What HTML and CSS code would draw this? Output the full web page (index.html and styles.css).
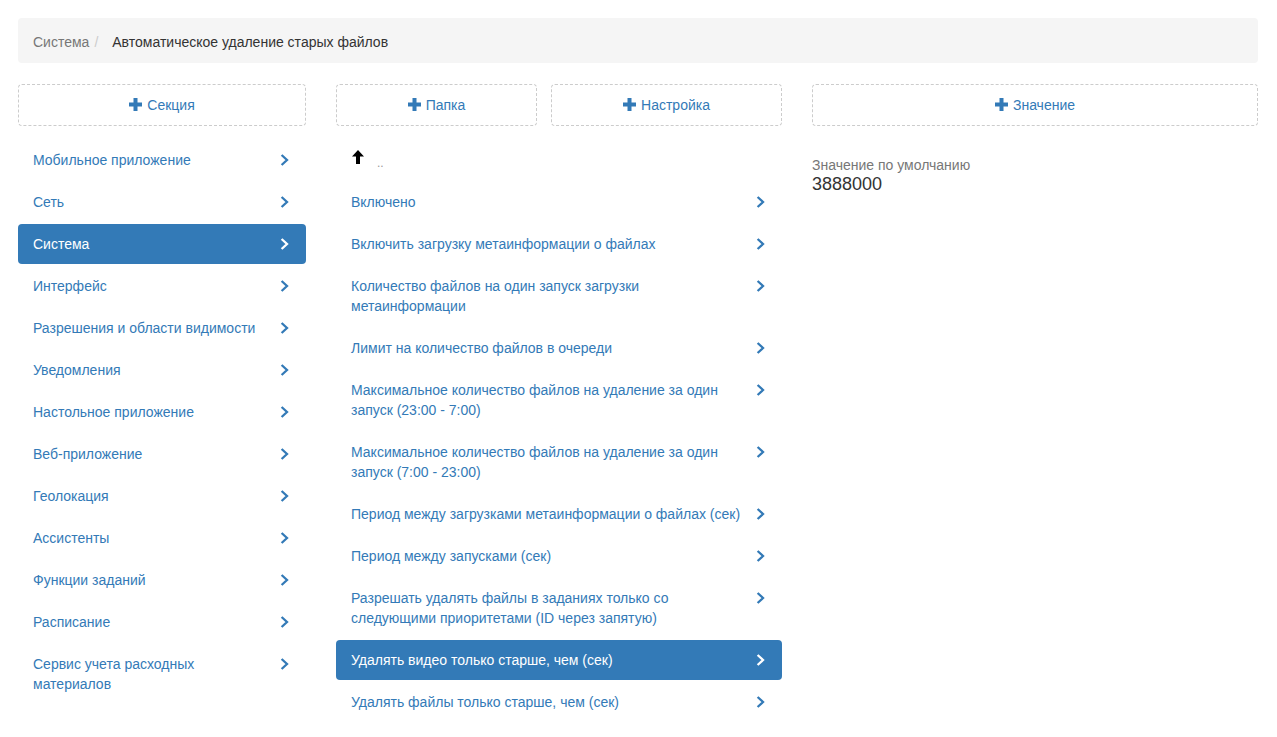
FILE: index.html
```html
<!DOCTYPE html>
<html lang="ru">
<head>
    <meta charset="UTF-8">
    <title>Настройки</title>
    <link rel="stylesheet" href="styles.css">
</head>
<body>
<div class="page">
    <!-- Breadcrumb -->
    <div class="breadcrumb">
        <span class="crumb">Система</span><span class="sep">/</span><span class="crumb active">Автоматическое удаление старых файлов</span>
    </div>

    <div class="columns">
        <!-- Sections -->
        <div class="column">
            <div class="btn-row">
                <button class="add-btn"><svg class="plus" viewBox="0 0 13 13"><path d="M4.5 0h4v4.5H13v4H8.5V13h-4V8.5H0v-4h4.5z"/></svg>Секция</button>
            </div>
            <ul class="nav-list">
                <li><a href="#"><span class="label">Мобильное приложение</span><svg class="chevron" viewBox="0 0 9 12"><polyline points="1.6,1 7,6 1.6,11"/></svg></a></li>
                <li><a href="#"><span class="label">Сеть</span><svg class="chevron" viewBox="0 0 9 12"><polyline points="1.6,1 7,6 1.6,11"/></svg></a></li>
                <li class="active"><a href="#"><span class="label">Система</span><svg class="chevron" viewBox="0 0 9 12"><polyline points="1.6,1 7,6 1.6,11"/></svg></a></li>
                <li><a href="#"><span class="label">Интерфейс</span><svg class="chevron" viewBox="0 0 9 12"><polyline points="1.6,1 7,6 1.6,11"/></svg></a></li>
                <li><a href="#"><span class="label">Разрешения и области видимости</span><svg class="chevron" viewBox="0 0 9 12"><polyline points="1.6,1 7,6 1.6,11"/></svg></a></li>
                <li><a href="#"><span class="label">Уведомления</span><svg class="chevron" viewBox="0 0 9 12"><polyline points="1.6,1 7,6 1.6,11"/></svg></a></li>
                <li><a href="#"><span class="label">Настольное приложение</span><svg class="chevron" viewBox="0 0 9 12"><polyline points="1.6,1 7,6 1.6,11"/></svg></a></li>
                <li><a href="#"><span class="label">Веб-приложение</span><svg class="chevron" viewBox="0 0 9 12"><polyline points="1.6,1 7,6 1.6,11"/></svg></a></li>
                <li><a href="#"><span class="label">Геолокация</span><svg class="chevron" viewBox="0 0 9 12"><polyline points="1.6,1 7,6 1.6,11"/></svg></a></li>
                <li><a href="#"><span class="label">Ассистенты</span><svg class="chevron" viewBox="0 0 9 12"><polyline points="1.6,1 7,6 1.6,11"/></svg></a></li>
                <li><a href="#"><span class="label">Функции заданий</span><svg class="chevron" viewBox="0 0 9 12"><polyline points="1.6,1 7,6 1.6,11"/></svg></a></li>
                <li><a href="#"><span class="label">Расписание</span><svg class="chevron" viewBox="0 0 9 12"><polyline points="1.6,1 7,6 1.6,11"/></svg></a></li>
                <li><a href="#"><span class="label">Сервис учета расходных материалов</span><svg class="chevron" viewBox="0 0 9 12"><polyline points="1.6,1 7,6 1.6,11"/></svg></a></li>
            </ul>
        </div>

        <!-- Folder contents -->
        <div class="column">
            <div class="btn-row">
                <button class="add-btn folder"><svg class="plus" viewBox="0 0 13 13"><path d="M4.5 0h4v4.5H13v4H8.5V13h-4V8.5H0v-4h4.5z"/></svg>Папка</button>
                <button class="add-btn setting"><svg class="plus" viewBox="0 0 13 13"><path d="M4.5 0h4v4.5H13v4H8.5V13h-4V8.5H0v-4h4.5z"/></svg>Настройка</button>
            </div>
            <ul class="nav-list">
                <li class="up"><a href="#"><svg class="arrow-up" viewBox="0 0 12 14"><path d="M6 0L12 6.5H8V14H4V6.5H0z"/></svg><span class="dots">..</span></a></li>
                <li><a href="#"><span class="label">Включено</span><svg class="chevron" viewBox="0 0 9 12"><polyline points="1.6,1 7,6 1.6,11"/></svg></a></li>
                <li><a href="#"><span class="label">Включить загрузку метаинформации о файлах</span><svg class="chevron" viewBox="0 0 9 12"><polyline points="1.6,1 7,6 1.6,11"/></svg></a></li>
                <li><a href="#"><span class="label">Количество файлов на один запуск загрузки метаинформации</span><svg class="chevron" viewBox="0 0 9 12"><polyline points="1.6,1 7,6 1.6,11"/></svg></a></li>
                <li><a href="#"><span class="label">Лимит на количество файлов в очереди</span><svg class="chevron" viewBox="0 0 9 12"><polyline points="1.6,1 7,6 1.6,11"/></svg></a></li>
                <li><a href="#"><span class="label">Максимальное количество файлов на удаление за один запуск (23:00 - 7:00)</span><svg class="chevron" viewBox="0 0 9 12"><polyline points="1.6,1 7,6 1.6,11"/></svg></a></li>
                <li><a href="#"><span class="label">Максимальное количество файлов на удаление за один запуск (7:00 - 23:00)</span><svg class="chevron" viewBox="0 0 9 12"><polyline points="1.6,1 7,6 1.6,11"/></svg></a></li>
                <li><a href="#"><span class="label">Период между загрузками метаинформации о файлах (сек)</span><svg class="chevron" viewBox="0 0 9 12"><polyline points="1.6,1 7,6 1.6,11"/></svg></a></li>
                <li><a href="#"><span class="label">Период между запусками (сек)</span><svg class="chevron" viewBox="0 0 9 12"><polyline points="1.6,1 7,6 1.6,11"/></svg></a></li>
                <li><a href="#"><span class="label">Разрешать удалять файлы в заданиях только со следующими приоритетами (ID через запятую)</span><svg class="chevron" viewBox="0 0 9 12"><polyline points="1.6,1 7,6 1.6,11"/></svg></a></li>
                <li class="active"><a href="#"><span class="label">Удалять видео только старше, чем (сек)</span><svg class="chevron" viewBox="0 0 9 12"><polyline points="1.6,1 7,6 1.6,11"/></svg></a></li>
                <li><a href="#"><span class="label">Удалять файлы только старше, чем (сек)</span><svg class="chevron" viewBox="0 0 9 12"><polyline points="1.6,1 7,6 1.6,11"/></svg></a></li>
            </ul>
        </div>

        <!-- Values -->
        <div class="column">
            <div class="btn-row">
                <button class="add-btn"><svg class="plus" viewBox="0 0 13 13"><path d="M4.5 0h4v4.5H13v4H8.5V13h-4V8.5H0v-4h4.5z"/></svg>Значение</button>
            </div>
            <div class="default-value">
                <div class="default-label">Значение по умолчанию</div>
                <div class="default-number">3888000</div>
            </div>
        </div>
    </div>
</div>
</body>
</html>
```

FILE: styles.css
```css
* {
    margin: 0;
    padding: 0;
    box-sizing: border-box;
}

body {
    font-family: "Liberation Sans", Arial, sans-serif;
    font-size: 14px;
    line-height: 20px;
    color: #333;
    background: #fff;
}

.page {
    padding: 18px 19px 18px 18px;
}

.breadcrumb {
    background: #f5f5f5;
    border-radius: 4px;
    padding: 14px 15px 11px;
    margin-bottom: 21px;
}

.breadcrumb .crumb {
    color: #777;
}

.breadcrumb .crumb.active {
    color: #333;
}

.breadcrumb .sep {
    color: #ccc;
    padding: 0 14px 0 5px;
}

.columns {
    display: grid;
    grid-template-columns: 288px 446px 446px;
    gap: 30px;
}

.btn-row {
    display: flex;
    gap: 14px;
    margin-bottom: 14px;
}

.add-btn {
    flex: 1 1 auto;
    height: 42px;
    border: 1px dashed #ccc;
    border-radius: 4px;
    background: #fff;
    color: #337ab7;
    font-family: inherit;
    font-size: 14px;
    display: flex;
    align-items: center;
    justify-content: center;
    cursor: pointer;
}

.add-btn.folder {
    flex: 0 0 201px;
}

.plus {
    width: 13px;
    height: 13px;
    fill: #337ab7;
    margin-right: 5px;
    margin-top: -1px;
}

.nav-list {
    list-style: none;
}

.nav-list li + li {
    margin-top: 2px;
}

.nav-list a {
    display: flex;
    align-items: flex-start;
    padding: 10px 17px 10px 15px;
    border-radius: 4px;
    color: #337ab7;
    text-decoration: none;
}

.nav-list .label {
    flex: 1;
}

.chevron {
    width: 9px;
    height: 12px;
    margin: 4px 0 0 10px;
    fill: none;
    stroke: #337ab7;
    stroke-width: 2.3;
}

.nav-list li.active a {
    background: #337ab7;
    color: #fff;
}

.nav-list li.active .chevron {
    stroke: #fff;
}

.nav-list li.up a {
    height: 40px;
    align-items: center;
    padding-left: 16px;
}

.arrow-up {
    width: 12px;
    height: 14px;
    fill: #000;
    margin-top: -7px;
}

.dots {
    color: #999;
    font-size: 12px;
    line-height: 14px;
    padding-top: 6px;
    margin-left: 13px;
}

.default-value {
    padding-top: 15px;
}

.default-label {
    color: #777;
}

.default-number {
    font-size: 18px;
    line-height: 18px;
    color: #333;
}
```
